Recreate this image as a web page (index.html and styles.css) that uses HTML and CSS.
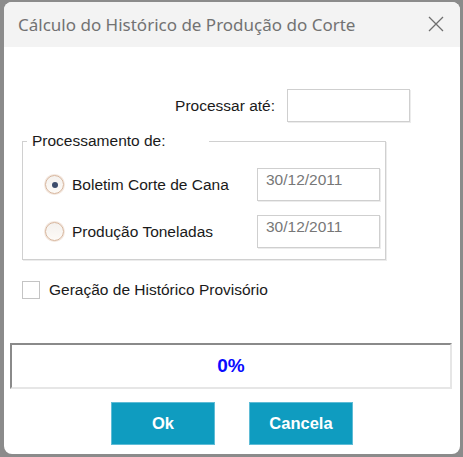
FILE: index.html
```html
<!DOCTYPE html>
<html lang="pt-BR">
<head>
    <meta charset="UTF-8">
    <meta name="viewport" content="width=device-width, initial-scale=1.0">
    <title>Cálculo do Histórico de Produção do Corte</title>
    <link rel="stylesheet" href="styles.css">
</head>
<body>
    <div class="window">
        <div class="title-bar">
            <span class="title">Cálculo do Histórico de Produção do Corte</span>
            <svg class="close" width="16" height="16" viewBox="0 0 16 16">
                <path d="M1 1 L15 15 M15 1 L1 15" stroke="#6f6f6f" stroke-width="1.3" fill="none"/>
            </svg>
        </div>

        <div class="content">
            <div class="process-row">
                <label for="ate">Processar até:</label>
                <input type="text" id="ate" class="field">
            </div>

            <fieldset class="group">
                <legend>Processamento de:</legend>
                <div class="option-row">
                    <span class="radio checked"></span>
                    <span class="option-label">Boletim Corte de Cana</span>
                    <div class="date-field">30/12/2011</div>
                </div>
                <div class="option-row">
                    <span class="radio"></span>
                    <span class="option-label">Produção Toneladas</span>
                    <div class="date-field">30/12/2011</div>
                </div>
            </fieldset>

            <div class="check-row">
                <span class="checkbox"></span>
                <span>Geração de Histórico Provisório</span>
            </div>

            <div class="progress">0%</div>

            <div class="buttons">
                <button class="btn">Ok</button>
                <button class="btn">Cancela</button>
            </div>
        </div>
    </div>
</body>
</html>
```

FILE: styles.css
```css
body {
    margin: 0;
    background-color: #8b8b8b;
    font-family: "Liberation Sans", Arial, sans-serif;
    font-size: 15.5px;
    color: #1a1a1a;
}

.window {
    margin: 2px 3px 0 4px;
    height: 452px;
    background-color: #ffffff;
    border-radius: 8px;
    overflow: hidden;
}

.title-bar {
    height: 45px;
    background-color: #f3f3f3;
    display: flex;
    align-items: center;
    justify-content: space-between;
    padding: 0 16px 0 14px;
}

.title {
    font-family: "Noto Sans", "Open Sans", sans-serif;
    font-size: 17px;
    color: #727272;
    margin-top: -1px;
}

.close {
    margin-top: -2px;
}

.content {
    display: flex;
    flex-direction: column;
}

.process-row {
    display: flex;
    justify-content: flex-end;
    align-items: center;
    gap: 12px;
    margin-top: 42px;
    padding-right: 50px;
}

.field {
    width: 123px;
    height: 33px;
    box-sizing: border-box;
    border: 1px solid #cfcfcf;
    box-shadow: 1px 1px 0 #ececec;
    padding: 0;
}

.group {
    margin: 10px 0 0 18px;
    width: 364px;
    box-sizing: border-box;
    border: 1px solid #d0d0d0;
    box-shadow: 1px 1px 0 #ececec;
    padding: 18px 5px 11px 22px;
}

.group legend {
    width: 177px;
    padding: 0 0 0 5px;
    margin-left: -18px;
    font-size: 15.5px;
}

.option-row {
    display: flex;
    align-items: center;
    height: 33px;
}

.option-row + .option-row {
    margin-top: 14px;
}

.radio {
    width: 17px;
    height: 17px;
    border-radius: 50%;
    border: 1px solid #d6b49b;
    background: linear-gradient(#f4f1ee, #fdfaf6);
    box-shadow: 0 0 0 1px #f3e7de;
    display: flex;
    align-items: center;
    justify-content: center;
    flex-shrink: 0;
}

.radio.checked::after {
    content: "";
    width: 6px;
    height: 6px;
    border-radius: 50%;
    background-color: #3d4c6b;
}

.option-label {
    margin-left: 8px;
    flex: 1;
}

.date-field {
    width: 123px;
    height: 33px;
    box-sizing: border-box;
    border: 1px solid #cfcfcf;
    box-shadow: 1px 1px 0 #ececec;
    color: #777777;
    padding: 2px 0 0 8px;
}

.check-row {
    display: flex;
    align-items: center;
    gap: 9px;
    margin: 21px 0 0 18px;
}

.checkbox {
    width: 18px;
    height: 18px;
    box-sizing: border-box;
    border: 1px solid #c4c4c4;
}

.progress {
    margin: 44px 0 0 6px;
    width: 442px;
    height: 46px;
    box-sizing: border-box;
    border-top: 2px solid #8a8a8a;
    border-left: 2px solid #8a8a8a;
    border-right: 2px solid #e6e6e6;
    border-bottom: 2px solid #e6e6e6;
    display: flex;
    align-items: center;
    justify-content: center;
    color: #0a0aff;
    font-weight: bold;
    font-size: 19px;
}

.buttons {
    display: flex;
    justify-content: center;
    gap: 34px;
    margin-top: 13px;
}

.btn {
    width: 104px;
    height: 43px;
    background-color: #0f9cc0;
    border: 1px solid #5fbcd6;
    color: #ffffff;
    font-family: "Liberation Sans", Arial, sans-serif;
    font-weight: bold;
    font-size: 16.5px;
    padding: 0;
}
```
